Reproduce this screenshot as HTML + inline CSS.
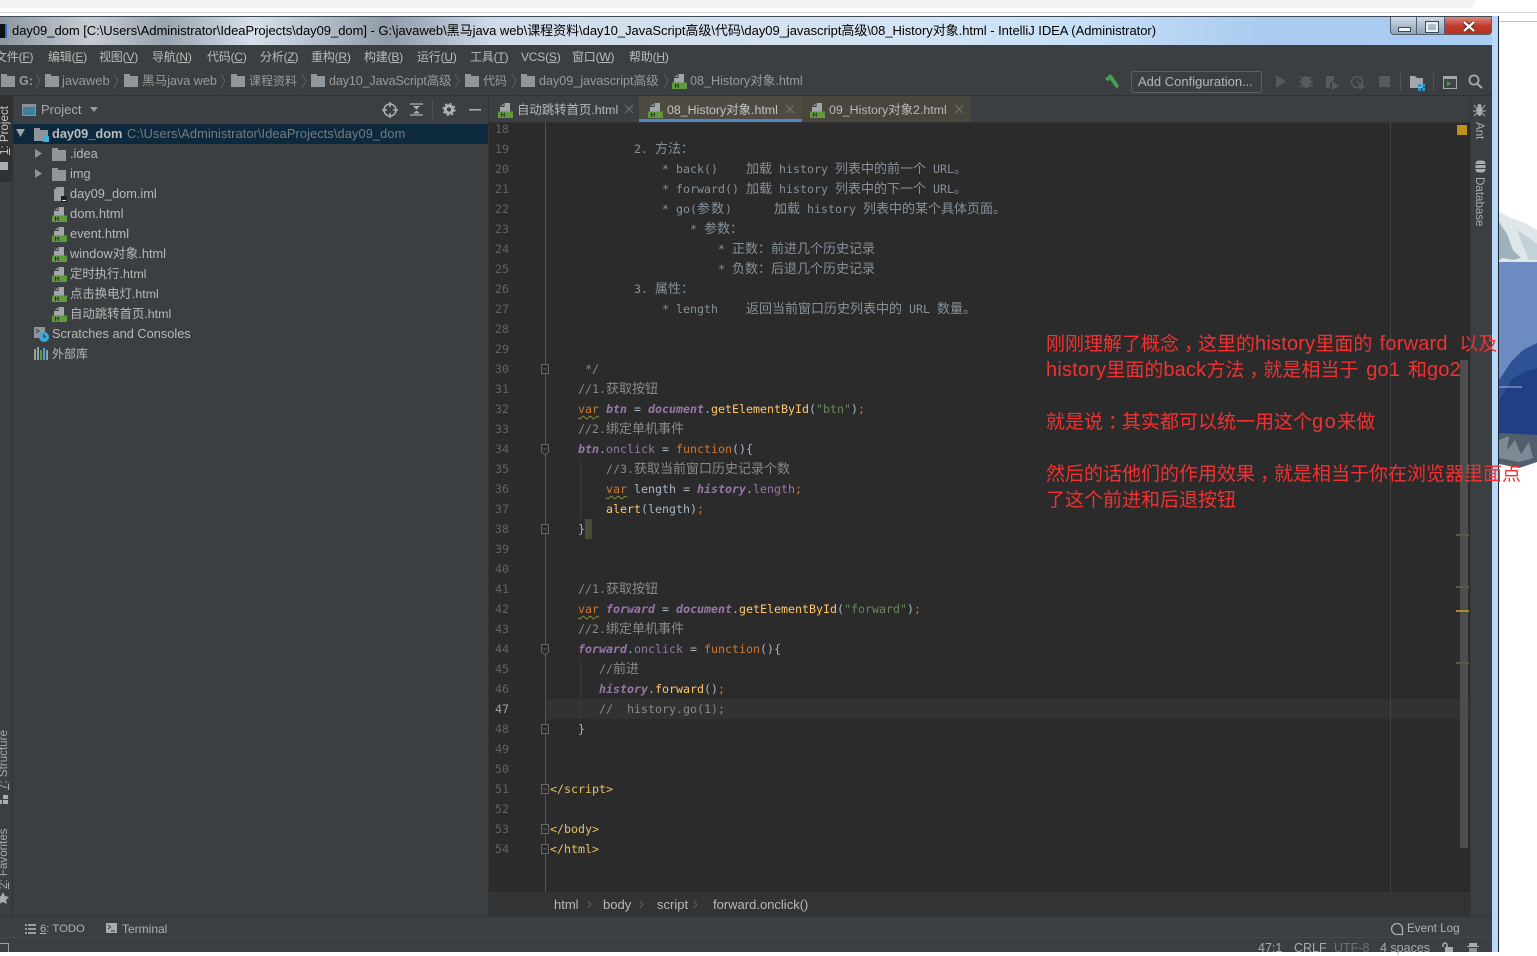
<!DOCTYPE html>
<html><head><meta charset="utf-8">
<style>
html,body{margin:0;padding:0;background:#fff}
body{width:1537px;height:952px;overflow:hidden;position:relative;font-family:"Liberation Sans","Noto Sans CJK SC",sans-serif;font-size:13px;color:#bbb}
.a{position:absolute;white-space:nowrap}
.b{position:absolute}
.ln{position:absolute;left:488px;width:21px;text-align:right;font:11.63px/20px "DejaVu Sans Mono",monospace;color:#606366;height:20px}
.l{position:absolute;left:550px;height:20px;font:11.63px/20px "DejaVu Sans Mono",monospace;white-space:pre;color:#a9b7c6}
.l s{text-decoration:none;font:13px/0 "Noto Sans CJK SC",sans-serif;color:inherit}
.g{color:#8a8a8a}.dc{color:#87909a}
.k{color:#cc7832}.kw{color:#cc7832;text-decoration:underline wavy #8a8a3a 1px;text-underline-offset:2px}
.p{color:#9876aa}.pb{color:#9876aa;font-style:italic;font-weight:bold}
.y{color:#ffc66d}.st{color:#6a8759}.t{color:#e8bf6a}
.m{top:49px;line-height:16px;font-size:12px;letter-spacing:-.2px;color:#bbb}
.m u{text-underline-offset:1px}
.n{top:73px;line-height:16px;color:#999;font-size:12.6px}
.f{position:absolute;width:14px;height:11px;background:#8f969c}
.f:before{content:"";position:absolute;left:0;top:-2px;width:6px;height:2px;background:#8f969c}
.r{font-size:12.8px;line-height:20px;color:#b8b8b8}
.rc{font-size:12.4px}
.tb{top:101px;line-height:18px;font-size:12.4px}
.red{color:#f33131;font-size:19px;line-height:26px;left:1046px;font-family:"Liberation Sans","Noto Sans CJK SC",sans-serif}
.red b{font-weight:normal;font-size:20px;line-height:0;letter-spacing:.2px}
.red i{font-style:normal;position:relative;left:5px}
.v{position:absolute;white-space:nowrap;font-size:11.6px;line-height:14px;color:#aaa}
</style></head><body>
<svg width="0" height="0" style="position:absolute"><defs>
<symbol id="h" viewBox="0 0 15 15"><path d="M2 9V4L6 0H12V9Z" fill="#a2a6a9"/><path d="M6 0V3.500H2.500" fill="none" stroke="#3c3f41"/><rect y="8.500" width="15" height="6.500" fill="#5f9a3c"/><text x="2.500" y="14.200" font-family="Liberation Sans" font-size="6.500" font-weight="bold" fill="#2b2b2b">H</text></symbol>
<symbol id="x" viewBox="0 0 10 10"><path d="M1 1L9 9M9 1L1 9" stroke="#6d7072" stroke-width="1.100" fill="none"/></symbol>
</defs></svg>

<!-- browser strip -->
<div class="b" style="left:0;top:0;width:1476px;height:8px;background:#f1f3f4;border-radius:0 0 8px 0"></div>
<div class="b" style="left:0;top:12px;width:1537px;height:1px;background:#dcdcdc"></div>
<div class="b" style="left:1492px;top:21px;width:45px;height:1px;background:#f2c230"></div>

<!-- wallpaper -->
<svg class="b" style="left:1499px;top:200px" width="38" height="280">
<rect y="60" width="38" height="180" fill="#6c8bc0"/>
<path d="M0 12L12 18L24 22L38 30V62H0Z" fill="#dfe6ea"/>
<path d="M0 22L8 34L14 50L22 58L14 60L4 58L0 60Z" fill="#9fb2bb"/>
<path d="M18 30L30 38L38 44V60H30L24 46Z" fill="#c3d1d8"/>
<path d="M0 180L12 162L24 150L38 143V235H0Z" fill="#2f5296"/>
<path d="M0 200L14 178L26 172L38 168V235H0Z" fill="#203f85"/>
<rect y="186.500" width="23" height="1" fill="#a8b6d2"/>
<path d="M0 233L38 235V262L20 268L0 264Z" fill="#515f6c"/>
<path d="M0 240L10 236L8 250L16 240L22 254L30 242L34 258L20 262L0 258Z" fill="#7c8a96"/>
</svg>
<div class="b" style="left:1498px;top:16px;width:1px;height:936px;background:#1b2430"></div>

<!-- window frame -->
<div class="b" style="left:0;top:16px;width:1498px;height:936px;background:#b9d8f8"></div>
<div class="b" style="left:0;top:16px;width:1492px;height:1px;background:#3f4a55"></div>
<div class="b" style="left:0;top:17px;width:1492px;height:28px;background:linear-gradient(90deg,#8d97a0 0,#c5ccd3 6%,#9aa4ae 11%,#d7e0ea 17%,#8f9ba8 26%,#cfdbe8 33%,#d5e4f4 60%,#c8e0f7 72%,#a9cbef 85%,#a9ccf1 100%)"></div>
<div class="b" style="left:0;top:24px;width:5px;height:14px;background:#111;border-right:2px solid #2a6fd0"></div>
<div class="a" id="ttl" style="left:12px;top:22px;line-height:17px;font-size:13px;color:#000;letter-spacing:-.035px">day09_dom [C:\Users\Administrator\IdeaProjects\day09_dom] - G:\javaweb\黑马java web\课程资料\day10_JavaScript高级\代码\day09_javascript高级\08_History对象.html - IntelliJ IDEA (Administrator)</div>
<!-- caption buttons -->
<div class="b" style="left:1390px;top:17px;width:27px;height:18px;background:linear-gradient(#cfdbe6,#8fa3b8);border:1px solid #50606f;border-top:0;border-radius:0 0 0 4px;box-sizing:border-box"></div>
<div class="b" style="left:1417px;top:17px;width:27px;height:18px;background:linear-gradient(#cfdbe6,#8fa3b8);border-bottom:1px solid #50606f;box-sizing:border-box"></div>
<div class="b" style="left:1444px;top:17px;width:48px;height:18px;background:linear-gradient(#d98a7c,#c0392b 55%,#b5331f);border:1px solid #50606f;border-top:0;border-radius:0 0 4px 0;box-sizing:border-box"></div>
<div class="b" style="left:1398px;top:27px;width:11px;height:3px;background:#f4f6f8;border:1px solid #39475a"></div>
<div class="b" style="left:1426px;top:22px;width:8px;height:6px;background:transparent;border:2px solid #eef1f4;outline:1px solid #39475a"></div>
<svg class="b" style="left:1462px;top:21px" width="14" height="11"><path d="M2 1L12 10M12 1L2 10" stroke="#39262a" stroke-width="4"/><path d="M2 1L12 10M12 1L2 10" stroke="#fff" stroke-width="2.400"/></svg>

<!-- IDE body -->
<div class="b" style="left:0;top:45px;width:1492px;height:907px;background:#3c3f41"></div>
<div class="b" style="left:0;top:95px;width:1492px;height:1px;background:#303234"></div>

<!-- menu -->
<div class="a m" style="left:-5px">文件(<u>F</u>)</div>
<div class="a m" style="left:48px">编辑(<u>E</u>)</div>
<div class="a m" style="left:99px">视图(<u>V</u>)</div>
<div class="a m" style="left:152px">导航(<u>N</u>)</div>
<div class="a m" style="left:207px">代码(<u>C</u>)</div>
<div class="a m" style="left:260px">分析(<u>Z</u>)</div>
<div class="a m" style="left:311px">重构(<u>R</u>)</div>
<div class="a m" style="left:364px">构建(<u>B</u>)</div>
<div class="a m" style="left:417px">运行(<u>U</u>)</div>
<div class="a m" style="left:470px">工具(<u>T</u>)</div>
<div class="a m" style="left:521px">VCS(<u>S</u>)</div>
<div class="a m" style="left:572px">窗口(<u>W</u>)</div>
<div class="a m" style="left:629px">帮助(<u>H</u>)</div>

<!-- nav -->
<div class="f" style="left:1px;top:76px"></div><div class="a n" style="left:19px;font-weight:bold">G:</div>
<div class="f" style="left:45px;top:76px"></div><div class="a n" style="left:62px;font-size:13px">javaweb</div>
<div class="f" style="left:124px;top:76px"></div><div class="a n" style="left:142px">黑马java web</div>
<div class="f" style="left:231px;top:76px"></div><div class="a n" style="left:249px;font-size:12px">课程资料</div>
<div class="f" style="left:311px;top:76px"></div><div class="a n" style="left:329px;letter-spacing:-.15px">day10_JavaScript高级</div>
<div class="f" style="left:465px;top:76px"></div><div class="a n" style="left:483px;font-size:12px">代码</div>
<div class="f" style="left:521px;top:76px"></div><div class="a n" style="left:539px">day09_javascript高级</div>
<svg class="b" style="left:672px;top:74px" width="15" height="15"><use href="#h"/></svg><div class="a n" style="left:690px">08_History对象.html</div>
<svg class="b" style="left:0;top:73px" width="670" height="16" fill="none" stroke="#5a5d5f"><path d="M36 1L40 8L36 15M114 1L118 8L114 15M221 1L225 8L221 15M302 1L306 8L302 15M455 1L459 8L455 15M512 1L516 8L512 15M664 1L668 8L664 15"/></svg>

<!-- toolbar -->
<svg class="b" style="left:1103px;top:73px" width="17" height="17"><path d="M2 6L7 1L9.500 3L16 13L13.500 15.500L7 6.500L5 8.500Z" fill="#499c54"/></svg>
<div class="b" style="left:1131px;top:71px;width:131px;height:22px;border:1px solid #5e6163;border-radius:3px;box-sizing:border-box"></div>
<div class="a" style="left:1138px;top:73px;line-height:18px;font-size:13px;color:#b5b5b5">Add Configuration...</div>
<svg class="b" style="left:1272px;top:72px" width="220" height="20">
<path d="M4 3L14 9.500L4 16Z" fill="#565a5c"/>
<ellipse cx="34" cy="10" rx="5" ry="6" fill="#565a5c"/><path d="M28 5L31 7M40 5L37 7M27 10H41M27 15L31 13M41 15L37 13" stroke="#565a5c" stroke-width="1.500"/>
<path d="M54 4H62V8L58 11V16H54Z" fill="#565a5c"/><path d="M60 9L67 14L60 18Z" fill="#565a5c"/>
<circle cx="85" cy="10" r="5.500" fill="none" stroke="#565a5c" stroke-width="1.600"/><path d="M85 7V10L87 12" stroke="#565a5c" fill="none"/><path d="M86 10L94 15L90 16L88 19Z" fill="#565a5c"/>
<rect x="107" y="4" width="11" height="11" fill="#565a5c"/>
<rect x="128" y="1" width="1" height="18" fill="#525557"/>
<path d="M138 4H143L145 6H151V16H138Z" fill="#a4a8ab"/><rect x="146" y="12" width="3" height="3" fill="#3592c4"/><rect x="150" y="12" width="3" height="3" fill="#3592c4"/><rect x="146" y="16" width="3" height="3" fill="#3592c4"/><rect x="150" y="16" width="3" height="3" fill="#3592c4"/>
<rect x="161" y="1" width="1" height="18" fill="#525557"/>
<rect x="171.500" y="4.500" width="13" height="12" fill="#3f4447" stroke="#a4a8ab"/><rect x="171" y="4" width="14" height="3" fill="#a4a8ab"/><path d="M175 9L179 11.500L175 14Z" fill="#499c54"/>
<circle cx="202" cy="8" r="4.600" fill="none" stroke="#a8abad" stroke-width="1.800"/><path d="M205 11.500L210 16" stroke="#a8abad" stroke-width="2"/>
</svg>

<!-- left strip -->
<div class="b" style="left:12px;top:96px;width:1px;height:821px;background:#2f3133"></div>
<div class="b" style="left:0;top:96px;width:12px;height:86px;background:#2f3133"></div>
<div class="v" style="left:-2px;top:155px;transform:rotate(-90deg);transform-origin:0 0;color:#c8c8c8"><u>1</u>: Project</div>
<div class="b" style="left:0;top:162px;width:8px;height:8px;background:#a8acaf"></div>
<div class="v" style="left:-3px;top:790px;transform:rotate(-90deg);transform-origin:0 0"><u>7</u>: Structure</div>
<div class="b" style="left:3px;top:795px;width:5px;height:4px;background:#a8acaf"></div><div class="b" style="left:0;top:800px;width:2px;height:4px;background:#a8acaf"></div><div class="b" style="left:3px;top:800px;width:5px;height:4px;background:#a8acaf"></div>
<div class="v" style="left:-3px;top:889px;transform:rotate(-90deg);transform-origin:0 0"><u>2</u>: Favorites</div>
<svg class="b" style="left:0;top:891px" width="9" height="14"><path d="M3 1L5 5L9 6L6 9L7 13L3 11L-1 13L0 9L-3 6L1 5Z" fill="#a8acaf"/></svg>

<!-- project header -->
<div class="b" style="left:22px;top:104px;width:14px;height:12px;border:1px solid #8b9196;box-sizing:border-box;background:linear-gradient(#8b9196 0 2px,#3e7e9e 2px)"></div>
<div class="a" style="left:41px;top:101px;line-height:17px;font-size:13px;color:#a9a9a9">Project</div>
<svg class="b" style="left:89px;top:106px" width="10" height="7"><path d="M1 1H9L5 6Z" fill="#9a9d9f"/></svg>
<svg class="b" style="left:380px;top:100px" width="104" height="20" fill="none">
<circle cx="10" cy="10" r="6" stroke="#aeb1b3" stroke-width="1.500"/><path d="M10 2V7M10 13V18M2 10H7M13 10H18" stroke="#aeb1b3" stroke-width="1.500"/>
<path d="M30 4H43M30 15H43" stroke="#aeb1b3" stroke-width="1.300"/><path d="M33 6H40L36.500 9.500ZM33 13.500H40L36.500 10.500Z" fill="#aeb1b3"/>
<rect x="52" y="0" width="1" height="19" fill="#4e5153"/>
<circle cx="69" cy="9.500" r="3.600" stroke="#aeb1b3" stroke-width="3"/><circle cx="69" cy="9.500" r="5.800" stroke="#aeb1b3" stroke-width="1.500" stroke-dasharray="2.300 2.300"/>
<rect x="89" y="9" width="12" height="1.500" fill="#aeb1b3"/>
</svg>

<!-- project tree -->
<div class="b" style="left:13px;top:124px;width:475px;height:20px;background:#0d293e"></div>
<svg class="b" style="left:15px;top:128px" width="11" height="10"><path d="M1 1H10L5.500 9Z" fill="#a0a3a5"/></svg>
<div class="f" style="left:34px;top:130px"></div><div class="b" style="left:43px;top:136px;width:6px;height:6px;background:#3fb0dc"></div>
<div class="a r" style="left:52px;top:124px;font-weight:bold;color:#bcbcbc">day09_dom</div>
<div class="a r" style="left:127px;top:124px;color:#787b7d;letter-spacing:.1px">C:\Users\Administrator\IdeaProjects\day09_dom</div>
<svg class="b" style="left:34px;top:148px" width="9" height="32"><path d="M1 1L8 5.500L1 10ZM1 21L8 25.500L1 30Z" fill="#8f9395"/></svg>
<div class="f" style="left:52px;top:150px"></div><div class="a r" style="left:70px;top:144px">.idea</div>
<div class="f" style="left:52px;top:170px"></div><div class="a r" style="left:70px;top:164px">img</div>
<svg class="b" style="left:52px;top:186px" width="16" height="16"><path d="M5 1H12V15H2V4Z" fill="#9a9fa3"/><rect x="9" y="10" width="6" height="6" fill="#1f1f1f"/><rect x="10" y="14" width="4" height="1" fill="#ddd"/></svg>
<div class="a r" style="left:70px;top:184px">day09_dom.iml</div>
<svg class="b" style="left:52px;top:207px" width="15" height="15"><use href="#h"/></svg><div class="a r" style="left:70px;top:204px;font-size:13px">dom.html</div>
<svg class="b" style="left:52px;top:227px" width="15" height="15"><use href="#h"/></svg><div class="a r" style="left:70px;top:224px">event.html</div>
<svg class="b" style="left:52px;top:247px" width="15" height="15"><use href="#h"/></svg><div class="a r" style="left:70px;top:244px">window对象.html</div>
<svg class="b" style="left:52px;top:267px" width="15" height="15"><use href="#h"/></svg><div class="a r rc" style="left:70px;top:264px">定时执行.html</div>
<svg class="b" style="left:52px;top:287px" width="15" height="15"><use href="#h"/></svg><div class="a r rc" style="left:70px;top:284px">点击换电灯.html</div>
<svg class="b" style="left:52px;top:307px" width="15" height="15"><use href="#h"/></svg><div class="a r rc" style="left:70px;top:304px">自动跳转首页.html</div>
<svg class="b" style="left:33px;top:326px" width="17" height="16"><path d="M1 1H12V8L8 12H1Z" fill="#8f9598"/><path d="M3 3L6 5L3 7" stroke="#3c3f41" fill="none"/><circle cx="11" cy="11" r="5" fill="#3fa7dc"/><path d="M11 8V11H13" stroke="#2b2b2b" fill="none"/></svg>
<div class="a r" style="left:52px;top:324px">Scratches and Consoles</div>
<svg class="b" style="left:34px;top:347px" width="15" height="13"><rect x="0" y="2" width="2" height="11" fill="#9a9fa3"/><rect x="3" y="0" width="2" height="13" fill="#9a9fa3"/><rect x="6" y="3" width="2" height="10" fill="#5f9a3c"/><rect x="9" y="1" width="2" height="12" fill="#3fa7dc"/><rect x="12" y="3" width="2" height="10" fill="#9a9fa3"/></svg>
<div class="a r" style="left:52px;top:344px;font-size:12px">外部库</div>

<!-- editor -->
<div class="b" style="left:488px;top:96px;width:1px;height:821px;background:#323436"></div>
<div class="b" style="left:639px;top:96px;width:163px;height:26px;background:#4e4c42"></div>
<div class="b" style="left:639px;top:119px;width:163px;height:3px;background:#4a88c7"></div>
<div class="b" style="left:802px;top:96px;width:169px;height:26px;background:#48463d"></div>
<svg class="b" style="left:498px;top:103px" width="15" height="15"><use href="#h"/></svg>
<div class="a tb" style="left:517px;color:#b8b8b8">自动跳转首页.html</div><svg class="b" style="left:624px;top:104px" width="10" height="10"><use href="#x"/></svg>
<svg class="b" style="left:648px;top:103px" width="15" height="15"><use href="#h"/></svg>
<div class="a tb" style="left:667px;color:#c4c4c4">08_History对象.html</div><svg class="b" style="left:785px;top:104px" width="10" height="10"><use href="#x"/></svg>
<svg class="b" style="left:810px;top:103px" width="15" height="15"><use href="#h"/></svg>
<div class="a tb" style="left:829px;color:#b8b8b8">09_History对象2.html</div><svg class="b" style="left:954px;top:104px" width="10" height="10"><use href="#x"/></svg>

<div class="b" style="left:489px;top:122px;width:981px;height:770px;background:#2b2b2b"></div>
<div class="b" style="left:489px;top:122px;width:981px;height:1px;background:#323232"></div>
<div class="b" style="left:545px;top:699px;width:925px;height:20px;background:#323232"></div>
<div class="b" style="left:545px;top:122px;width:1px;height:770px;background:#555"></div>
<div class="b" style="left:1390px;top:122px;width:1px;height:770px;background:#444"></div>
<div class="b" style="left:1457px;top:125px;width:10px;height:10px;background:#be9117"></div>
<div class="b" style="left:1460px;top:360px;width:8px;height:488px;background:#4d4d4d"></div>
<div class="b" style="left:1456px;top:534px;width:13px;height:2px;background:#5c5a45"></div>
<div class="b" style="left:1456px;top:586px;width:13px;height:2px;background:#5c5a45"></div>
<div class="b" style="left:1456px;top:610px;width:13px;height:2px;background:#a68a2c"></div>
<div class="b" style="left:1456px;top:662px;width:13px;height:2px;background:#5c5a45"></div>
<div class="b" style="left:580px;top:459px;width:1px;height:60px;background:#3b3b3b"></div>
<div class="b" style="left:580px;top:659px;width:1px;height:60px;background:#3b3b3b"></div>
<div class="b" style="left:585px;top:519px;width:7px;height:20px;background:#4b4a35"></div>

<!-- fold marks -->
<svg class="b" style="left:538px;top:360px" width="14" height="500" fill="#2b2b2b" stroke="#666">
<path d="M3.500 4.500H10.500V13.500H3.500Z M5.500 9H8.500"/>
<path d="M3.500 84.500H10.500V92L7 95L3.500 92Z M5.500 89H8.500"/>
<path d="M3.500 164.500H10.500V173.500H3.500Z M5.500 169H8.500"/>
<path d="M3.500 284.500H10.500V292L7 295L3.500 292Z M5.500 289H8.500"/>
<path d="M3.500 364.500H10.500V373.500H3.500Z M5.500 369H8.500"/>
<path d="M3.500 424.500H10.500V433.500H3.500Z M5.500 429H8.500"/>
<path d="M3.500 464.500H10.500V473.500H3.500Z M5.500 469H8.500"/>
<path d="M3.500 484.500H10.500V493.500H3.500Z M5.500 489H8.500"/>
</svg>

<!-- line numbers -->
<div class="ln" style="top:119px">18</div><div class="ln" style="top:139px">19</div><div class="ln" style="top:159px">20</div><div class="ln" style="top:179px">21</div><div class="ln" style="top:199px">22</div><div class="ln" style="top:219px">23</div><div class="ln" style="top:239px">24</div><div class="ln" style="top:259px">25</div><div class="ln" style="top:279px">26</div><div class="ln" style="top:299px">27</div><div class="ln" style="top:319px">28</div><div class="ln" style="top:339px">29</div><div class="ln" style="top:359px">30</div><div class="ln" style="top:379px">31</div><div class="ln" style="top:399px">32</div><div class="ln" style="top:419px">33</div><div class="ln" style="top:439px">34</div><div class="ln" style="top:459px">35</div><div class="ln" style="top:479px">36</div><div class="ln" style="top:499px">37</div><div class="ln" style="top:519px">38</div><div class="ln" style="top:539px">39</div><div class="ln" style="top:559px">40</div><div class="ln" style="top:579px">41</div><div class="ln" style="top:599px">42</div><div class="ln" style="top:619px">43</div><div class="ln" style="top:639px">44</div><div class="ln" style="top:659px">45</div><div class="ln" style="top:679px">46</div><div class="ln" style="top:699px;color:#a4a3a3">47</div><div class="ln" style="top:719px">48</div><div class="ln" style="top:739px">49</div><div class="ln" style="top:759px">50</div><div class="ln" style="top:779px">51</div><div class="ln" style="top:799px">52</div><div class="ln" style="top:819px">53</div><div class="ln" style="top:839px">54</div>

<!-- code -->
<div class="l dc" style="top:139px">            2. <s>方法：</s></div>
<div class="l dc" style="top:159px">                * back()    <s>加载</s> history <s>列表中的前一个</s> URL<s>。</s></div>
<div class="l dc" style="top:179px">                * forward() <s>加载</s> history <s>列表中的下一个</s> URL<s>。</s></div>
<div class="l dc" style="top:199px">                * go(<s style="letter-spacing:1px">参数</s>)      <s>加载</s> history <s>列表中的某个具体页面。</s></div>
<div class="l dc" style="top:219px">                    * <s>参数：</s></div>
<div class="l dc" style="top:239px">                        * <s>正数：前进几个历史记录</s></div>
<div class="l dc" style="top:259px">                        * <s>负数：后退几个历史记录</s></div>
<div class="l dc" style="top:279px">            3. <s>属性：</s></div>
<div class="l dc" style="top:299px">                * length    <s>返回当前窗口历史列表中的</s> URL <s>数量。</s></div>
<div class="l g" style="top:359px">     */</div>
<div class="l g" style="top:379px">    //1.<s>获取按钮</s></div>
<div class="l" style="top:399px">    <span class="kw">var</span> <span class="pb">btn</span> = <span class="pb">document</span>.<span class="y">getElementById</span>(<span class="st">"btn"</span>)<span class="k">;</span></div>
<div class="l g" style="top:419px">    //2.<s>绑定单机事件</s></div>
<div class="l" style="top:439px">    <span class="pb">btn</span>.<span class="p">onclick</span> = <span class="k">function</span>(){</div>
<div class="l g" style="top:459px">        //3.<s>获取当前窗口历史记录个数</s></div>
<div class="l" style="top:479px">        <span class="kw">var</span> length = <span class="pb">history</span>.<span class="p">length</span><span class="k">;</span></div>
<div class="l" style="top:499px">        <span class="y">alert</span>(length)<span class="k">;</span></div>
<div class="l" style="top:519px">    }</div>
<div class="l g" style="top:579px">    //1.<s>获取按钮</s></div>
<div class="l" style="top:599px">    <span class="kw">var</span> <span class="pb">forward</span> = <span class="pb">document</span>.<span class="y">getElementById</span>(<span class="st">"forward"</span>)<span class="k">;</span></div>
<div class="l g" style="top:619px">    //2.<s>绑定单机事件</s></div>
<div class="l" style="top:639px">    <span class="pb">forward</span>.<span class="p">onclick</span> = <span class="k">function</span>(){</div>
<div class="l g" style="top:659px">       //<s>前进</s></div>
<div class="l" style="top:679px">       <span class="pb">history</span>.<span class="y">forward</span>()<span class="k">;</span></div>
<div class="l g" style="top:699px">       //  history.go(1);</div>
<div class="l" style="top:719px">    }</div>
<div class="l t" style="top:779px">&lt;/script&gt;</div>
<div class="l t" style="top:819px">&lt;/body&gt;</div>
<div class="l t" style="top:839px">&lt;/html&gt;</div>

<!-- red annotation -->
<div class="a red" style="top:332px">刚刚理解了概念<i>，</i>这里的<b>history</b>里面的 <b style="margin-left:2px">forward</b>&nbsp; <span style="margin-left:1px">以及</span></div>
<div class="a red" style="top:358px;word-spacing:2.500px"><b>history</b>里面的<b>back</b>方法<i>，</i>就是相当于 <b>go1</b> 和<b>go2</b></div>
<div class="a red" style="top:410px">就是说<i>：</i>其实都可以统一用这个<b style="letter-spacing:1.500px">go</b>来做</div>
<div class="a red" style="top:462px">然后的话他们的作用效果<i>，</i>就是相当于你在浏览器里面点</div>
<div class="a red" style="top:488px">了这个前进和后退按钮</div>

<!-- breadcrumbs -->
<div class="b" style="left:489px;top:892px;width:981px;height:25px;background:#313335;border-top:1px solid #373a3c;box-sizing:border-box"></div>
<div class="a" style="left:554px;top:896px;line-height:17px;color:#b8b8b8">html</div>
<div class="a" style="left:603px;top:896px;line-height:17px;color:#b8b8b8">body</div>
<div class="a" style="left:657px;top:896px;line-height:17px;color:#b8b8b8">script</div>
<div class="a" style="left:713px;top:896px;line-height:17px;color:#b8b8b8">forward.onclick()</div>
<svg class="b" style="left:585px;top:899px" width="130" height="11" fill="none" stroke="#5f6264"><path d="M3 2L6 5.500L3 9M55 2L58 5.500L55 9M109 2L112 5.500L109 9"/></svg>

<!-- right strip -->
<div class="b" style="left:1470px;top:96px;width:1px;height:821px;background:#353739"></div>
<svg class="b" style="left:1473px;top:103px" width="13" height="14"><ellipse cx="6.500" cy="8" rx="3" ry="5" fill="#a8acaf"/><circle cx="6.500" cy="3" r="2" fill="#a8acaf"/><path d="M1 2L4 6M12 2L9 6M0 8H13M1 13L4 10M12 13L9 10" stroke="#a8acaf"/></svg>
<div class="v" style="left:1486px;top:122px;transform:rotate(90deg);transform-origin:0 0">Ant</div>
<svg class="b" style="left:1475px;top:160px" width="11" height="13"><rect x=".5" y=".5" width="10" height="12" rx="3" fill="#a8acaf"/><path d="M0 4.500H11M0 8.500H11" stroke="#3c3f41"/></svg>
<div class="v" style="left:1486px;top:177px;transform:rotate(90deg);transform-origin:0 0">Database</div>

<!-- bottom bars -->
<div class="b" style="left:0;top:916px;width:1492px;height:1px;background:#323436"></div>
<div class="b" style="left:0;top:937px;width:1492px;height:1px;background:#47494b"></div>
<svg class="b" style="left:25px;top:924px" width="11" height="10"><path d="M0 1H2M3 1H11M0 5H2M3 5H11M0 9H2M3 9H11" stroke="#a8acaf" stroke-width="1.800"/></svg>
<div class="a" style="left:40px;top:921px;line-height:16px;font-size:11.3px;color:#b0b0b0"><u>6</u>: TODO</div>
<div class="b" style="left:106px;top:923px;width:11px;height:10px;background:#a8acaf"></div>
<svg class="b" style="left:106px;top:923px" width="11" height="10" fill="none" stroke="#3c3f41"><path d="M2 2L4.500 4L2 6M5 8H9"/></svg>
<div class="a" style="left:122px;top:921px;line-height:16px;font-size:12px;color:#b0b0b0">Terminal</div>
<svg class="b" style="left:1390px;top:922px" width="14" height="14" fill="none"><path d="M12.500 12.500H6.500A5.500 5.500 0 1 1 12.500 7Z" stroke="#a8acaf" stroke-width="1.300"/></svg>
<div class="a" style="left:1407px;top:921px;line-height:16px;font-size:11.7px;color:#b0b0b0">Event Log</div>
<div class="a" style="left:1258px;top:940px;line-height:16px;font-size:12.5px;color:#aaa">47:1</div>
<div class="a" style="left:1294px;top:940px;line-height:16px;font-size:12.5px;color:#aaa">CRLF</div>
<div class="a" style="left:1334px;top:940px;line-height:16px;font-size:12.5px;color:#6d7073">UTF-8</div>
<div class="a" style="left:1380px;top:940px;line-height:16px;font-size:12.5px;color:#aaa">4 spaces</div>
<svg class="b" style="left:1440px;top:942px" width="14" height="10"><path d="M3 5V3A2 2 0 0 1 7 3V5" stroke="#a8acaf" fill="none" stroke-width="1.500"/><rect x="5" y="5" width="8" height="5" fill="#a8acaf"/></svg>
<svg class="b" style="left:1466px;top:942px" width="14" height="10"><path d="M3 4V1H11V4H13V5H1V4Z" fill="#a8acaf"/><rect x="3" y="6" width="8" height="4" fill="#8b8f92"/></svg>
<div class="b" style="left:0;top:943px;width:9px;height:9px;border-top:1px solid #a0a0a0;border-right:1px solid #a0a0a0;box-sizing:border-box"></div>
</body></html>
